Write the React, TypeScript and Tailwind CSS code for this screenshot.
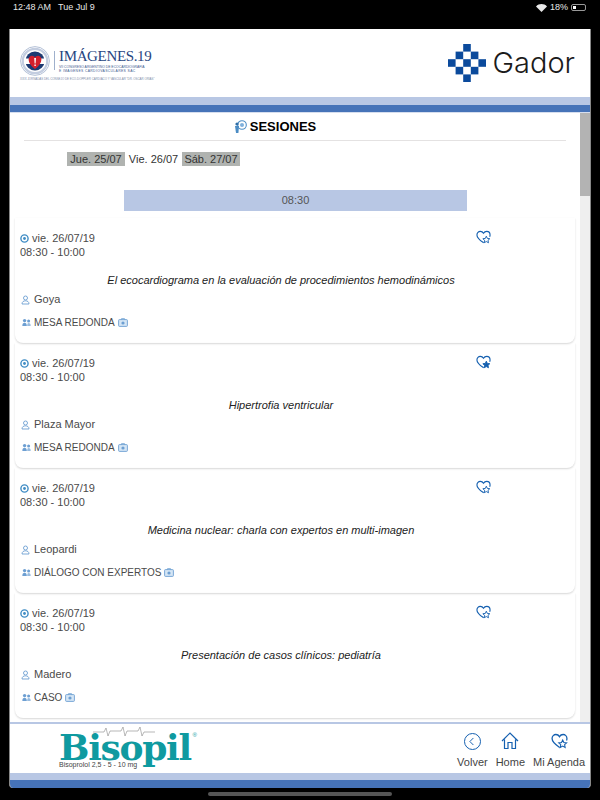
import { ChevronLeft } from 'lucide-react';

const sessions = [
  { date: 'vie. 26/07/19', title: 'El ecocardiograma en la evaluación de procedimientos hemodinámicos', room: 'Goya', kind: 'MESA REDONDA', saved: false },
  { date: 'vie. 26/07/19', title: 'Hipertrofia ventricular', room: 'Plaza Mayor', kind: 'MESA REDONDA', saved: true },
  { date: 'vie. 26/07/19', title: 'Medicina nuclear: charla con expertos en multi-imagen', room: 'Leopardi', kind: 'DIÁLOGO CON EXPERTOS', saved: false },
  { date: 'vie. 26/07/19', title: 'Presentación de casos clínicos: pediatría', room: 'Madero', kind: 'CASO', saved: false },
];

const gadorSquares = [
  [15, 0], [7.5, 7.5], [22.5, 7.5], [0, 15], [15, 15], [30, 15], [7.5, 22.5], [22.5, 22.5], [15, 30],
];

function HeartStar({ filled, size = 15 }: { filled: boolean; size?: number }) {
  return (
    <svg width={size} height={size} viewBox="0 0 16 16" fill="none" className="text-[#1560b0]">
      <path d="M8.2 13.6 C5.5 11.8 1 9 1 5.2 C1 2.9 2.7 1.4 4.6 1.4 C6 1.4 7.3 2.2 8 3.4 C8.7 2.2 10 1.4 11.4 1.4 C13.3 1.4 15 2.9 15 5.2 C15 5.9 14.9 6.5 14.6 7.1" stroke="currentColor" strokeWidth="1.2" />
      <path
        d="M11 6.6 L12.1 9 L14.7 9.3 L12.8 11 L13.3 13.6 L11 12.3 L8.7 13.6 L9.2 11 L7.3 9.3 L9.9 9 Z"
        fill={filled ? 'currentColor' : 'white'}
        stroke="currentColor"
        strokeWidth="1"
      />
    </svg>
  );
}

function ClockDot() {
  return (
    <svg width="9" height="9" viewBox="0 0 9 9" className="shrink-0">
      <circle cx="4.5" cy="4.5" r="3.6" fill="none" stroke="#3f8cc4" strokeWidth="1.4" />
      <circle cx="4.5" cy="4.5" r="1.4" fill="#3f8cc4" />
    </svg>
  );
}

function Person() {
  return (
    <svg width="9" height="10" viewBox="0 0 9 10" fill="none" stroke="#6d9fd2" strokeWidth="0.9" className="shrink-0">
      <circle cx="4.5" cy="3" r="2" />
      <path d="M1 9 C1 6.8 2.5 5.8 4.5 5.8 C6.5 5.8 8 6.8 8 9 Z" />
    </svg>
  );
}

function Group() {
  return (
    <svg width="9" height="9" viewBox="0 0 9 9" fill="#6d9fd2" className="shrink-0">
      <circle cx="2.6" cy="2.6" r="1.7" />
      <circle cx="6.6" cy="3" r="1.5" />
      <path d="M0.3 8 C0.3 5.6 1.3 4.8 2.6 4.8 C3.9 4.8 4.8 5.6 4.8 8 Z" />
      <path d="M5.2 8 C5.2 6 5.6 5 6.6 5 C7.8 5 8.7 5.8 8.7 8 Z" opacity="0.7" />
    </svg>
  );
}

function Badge() {
  return (
    <svg width="10" height="9" viewBox="0 0 10 9" fill="none" className="shrink-0">
      <rect x="0.6" y="1.6" width="8.8" height="6.8" rx="0.8" fill="#d5e6f5" stroke="#6d9fd2" strokeWidth="0.9" />
      <circle cx="5" cy="5" r="1.6" fill="#6d9fd2" />
      <path d="M3.5 1.5 V0.6 H6.5 V1.5" stroke="#6d9fd2" strokeWidth="0.8" />
    </svg>
  );
}

function SessionCard({ s }: { s: (typeof sessions)[number] }) {
  return (
    <div className="mx-[5px] h-[125px] shrink-0 rounded-b-lg shadow-[0_1px_2px_rgba(0,0,0,0.16)] px-[5px] pt-[13px] text-[11px] leading-[13px] text-[#4a4a4a]">
      <div className="flex justify-between pr-[79px]">
        <div>
          <div className="flex items-center gap-[3px] pt-[1px]">
            <ClockDot />
            <span>{s.date}</span>
          </div>
          <div className="mt-[1px]">08:30 - 10:00</div>
        </div>
        <div className="-mt-[1px]">
          <HeartStar filled={s.saved} />
        </div>
      </div>
      <div className="mt-[15px] pr-[28px] text-center italic text-[#222]">{s.title}</div>
      <div className="mt-[6px] flex items-center gap-[3px] pl-[1px]">
        <Person />
        <span className="ml-[1px]">{s.room}</span>
      </div>
      <div className="mt-[10px] flex items-center gap-[3px] pl-[2px] text-[10px]">
        <Group />
        <span>{s.kind}</span>
        <Badge />
      </div>
    </div>
  );
}

function FooterLink({ label, children }: { label: string; children: React.ReactNode }) {
  return (
    <div className="flex flex-col items-center">
      <div className="flex h-[24px] items-center text-[#1560b0]">{children}</div>
      <span className="mt-[3px] text-[11px] leading-[13px] text-[#444]">{label}</span>
    </div>
  );
}

export default function App() {
  return (
    <div className="flex h-[800px] w-[600px] flex-col overflow-hidden bg-black font-['Liberation_Sans',sans-serif]">
      {/* status bar */}
      <div className="flex h-[29px] shrink-0 items-start justify-between px-[13px] pt-[2px] text-[9px] leading-[11px] text-[#e8e8e8]">
        <div className="flex gap-[7px]">
          <span>12:48 AM</span>
          <span>Tue Jul 9</span>
        </div>
        <div className="flex items-center gap-[3px] pr-[1px]">
          <svg width="11" height="8" viewBox="0 0 11 8" fill="#e8e8e8">
            <path d="M5.5 8 L0 2.4 C3 -0.7 8 -0.7 11 2.4 Z" />
          </svg>
          <span>18%</span>
          <div className="flex h-[7px] w-[15px] rounded-[2px] border border-[#999] p-[1px]">
            <div className="w-[3px] bg-white" />
          </div>
        </div>
      </div>

      <div className="mx-[9px] mb-[12px] flex min-h-0 flex-1 flex-col overflow-hidden rounded-b-[4px] border-x border-[#888] bg-white">
        {/* header */}
        <div className="flex h-[68px] shrink-0 items-center justify-between pl-[10px] pr-[15px]">
          <div className="flex flex-col">
            <div className="flex items-center">
              <svg width="30" height="30" viewBox="0 0 30 30">
                <circle cx="15" cy="15" r="14.4" fill="white" stroke="#9fb0cc" strokeWidth="0.8" />
                <circle cx="15" cy="15" r="12.2" fill="none" stroke="#c3cde0" strokeWidth="2.2" />
                <circle cx="15" cy="15" r="9.6" fill="#1d3b72" />
                <rect x="4" y="12.5" width="22" height="5.5" fill="white" />
                <path d="M15 23 C11 20 8.6 17 8.6 13.6 C8.6 11.2 10.4 9.8 12 9.8 C13.3 9.8 14.4 10.5 15 11.6 C15.6 10.5 16.7 9.8 18 9.8 C19.6 9.8 21.4 11.2 21.4 13.6 C21.4 17 19 20 15 23 Z" fill="#d3202c" />
                <path d="M14.2 12 H16 L15.6 17.5 H14.6 Z M14.4 18.6 H15.8 V20 H14.4 Z" fill="white" />
              </svg>
              <div className="mx-[4px] h-[19px] w-px bg-[#9fb0cc]" />
              <div className="flex flex-col">
                <span className="font-['Liberation_Serif',serif] text-[15px] leading-[15px] tracking-[-0.35px] text-[#27457f]">IMÁGENES.19</span>
                <span className="mt-[1px] whitespace-nowrap text-[3.4px] leading-[4px] text-[#3d5a8f]">VII CONGRESO ARGENTINO DE ECOCARDIOGRAFÍA</span>
                <span className="whitespace-nowrap text-[3.4px] leading-[4px] tracking-[0.35px] text-[#3d5a8f]">E IMÁGENES CARDIOVASCULARES SAC</span>
              </div>
            </div>
            <span className="mt-[1px] whitespace-nowrap text-[2.9px] leading-[4px] text-[#7b8aa8]">XXIX JORNADAS DEL CONSEJO DE ECO-DOPPLER CARDÍACO Y VASCULAR "DR. OSCAR ORÍAS"</span>
          </div>
          <div className="flex items-center gap-[6px]">
            <svg width="38" height="38" viewBox="0 0 37.5 37.5" fill="#0b4a9c">
              {gadorSquares.map(([x, y], i) => (
                <rect key={i} x={x} y={y} width="7.5" height="7.5" />
              ))}
            </svg>
            <span className="font-['Inter',sans-serif] text-[29px] leading-[34px] font-light text-[#1b1b1b]">Gador</span>
          </div>
        </div>
        <div className="h-[8px] shrink-0 bg-[#b8c7e4]" />
        <div className="h-[7px] shrink-0 bg-[#4673b8]" />

        {/* content */}
        <div className="flex min-h-0 flex-1 border-t border-[#d6deee]">
          <div className="min-w-0 flex-1 overflow-hidden">
            <div className="mx-[14px] flex h-[28px] items-center justify-center border-b border-[#e4e2e2] pr-[40px] pt-[1px]">
              <svg width="13" height="14" viewBox="0 0 13 14" fill="none" className="mr-[3px]">
                <circle cx="8" cy="5" r="4.3" stroke="#4b8cc4" strokeWidth="1.1" />
                <circle cx="8" cy="5" r="2" fill="#7fb0dc" />
                <path d="M1 6 H5 L4.4 13 H2 Z" fill="#4b8cc4" />
                <circle cx="3" cy="4" r="1.6" fill="#2f6ea6" />
              </svg>
              <span className="text-[13px] font-bold text-black">SESIONES</span>
            </div>
            <div className="mt-[11px] flex items-center pl-[57px] text-[11px] leading-[14px] text-[#333]">
              <span className="w-[58px] bg-[#b0b3b0] text-center">Jue. 25/07</span>
              <span className="w-[57px] text-center">Vie. 26/07</span>
              <span className="w-[58px] bg-[#b0b3b0] text-center">Sáb. 27/07</span>
            </div>
            <div className="ml-[114px] mt-[24px] flex h-[21px] w-[343px] items-center justify-center bg-[#b8c7e4] text-[11px] text-[#555]">08:30</div>
            <div className="mt-[7px] flex flex-col">
              {sessions.map((s, i) => (
                <SessionCard key={i} s={s} />
              ))}
            </div>
          </div>
          <div className="w-[10px] shrink-0 bg-[#efefef]">
            <div className="h-[83px] bg-[#b3b3b3]" />
          </div>
        </div>

        {/* footer */}
        <div className="flex h-[51px] shrink-0 items-start justify-between border-t-2 border-[#b8c7e4] pl-[49px] pr-[5px]">
          <div className="relative mt-[5px]">
            <svg width="62" height="11" viewBox="0 0 62 11" fill="none" stroke="#888" strokeWidth="0.6" className="absolute left-[34px] -top-[3px]">
              <path d="M0 6 H11 L13 2 L15 10 L17 5 H28 L30 1 L32 10 L34 5 H45 L47 1 L49 10 L51 6 H62" />
            </svg>
            <div className="font-['DejaVu_Serif',serif] text-[36px] leading-[36px] font-bold tracking-[-1.3px] text-[#0f9aa0]">Bisopil</div>
            <span className="absolute -right-[6px] top-[3px] text-[6px] leading-[6px] text-[#0f9aa0]">®</span>
            <div className="-mt-[4px] text-[7px] leading-[8px] font-medium text-[#444]">Bisoprolol 2,5 - 5 - 10 mg</div>
          </div>
          <div className="mt-[5px] flex gap-[8px]">
            <FooterLink label="Volver">
              <div className="flex h-[17px] w-[17px] items-center justify-center rounded-full border-[1.5px] border-[#1560b0]">
                <ChevronLeft size={13} strokeWidth={1.8} className="-ml-[1px]" />
              </div>
            </FooterLink>
            <FooterLink label="Home">
              <svg width="18" height="18" viewBox="0 0 18 18" fill="none" stroke="currentColor" strokeWidth="1.2">
                <path d="M1 9 L9 1 L17 9 M3.5 7.5 V16.5 H7 V10.5 H11 V16.5 H14.5 V7.5" />
              </svg>
            </FooterLink>
            <FooterLink label="Mi Agenda">
              <HeartStar filled={false} size={17} />
            </FooterLink>
          </div>
        </div>
        <div className="h-[7px] shrink-0 bg-[#b8c7e4]" />
        <div className="h-[8px] shrink-0 bg-[#4673b8]" />
      </div>

      {/* home indicator */}
      <div className="absolute left-[208px] top-[792px] h-[4px] w-[184px] rounded-full bg-[#555]" />
    </div>
  );
}
